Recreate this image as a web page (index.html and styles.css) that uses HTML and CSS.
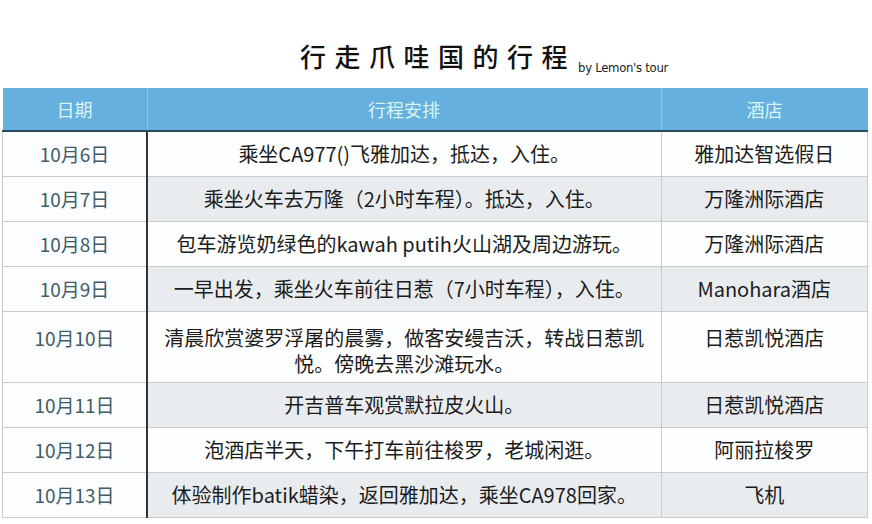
FILE: index.html
```html
<!DOCTYPE html>
<html lang="zh">
<head>
<meta charset="utf-8">
<link rel="stylesheet" href="styles.css">
</head>
<body>
<div class="page">
  <div class="title-bar">
    <h1 class="title">行走爪哇国的行程</h1>
    <span class="byline">by Lemon's tour</span>
  </div>
  <table class="plan">
    <thead>
      <tr>
        <th class="c-date">日期</th>
        <th class="c-plan">行程安排</th>
        <th class="c-hotel">酒店</th>
      </tr>
    </thead>
    <tbody>
      <tr><td class="c-date">10月6日</td><td class="c-plan">乘坐CA977()飞雅加达，抵达，入住。</td><td class="c-hotel">雅加达智选假日</td></tr>
      <tr class="alt"><td class="c-date">10月7日</td><td class="c-plan">乘坐火车去万隆（2小时车程）。抵达，入住。</td><td class="c-hotel">万隆洲际酒店</td></tr>
      <tr><td class="c-date">10月8日</td><td class="c-plan">包车游览奶绿色的kawah putih火山湖及周边游玩。</td><td class="c-hotel">万隆洲际酒店</td></tr>
      <tr class="alt"><td class="c-date">10月9日</td><td class="c-plan">一早出发，乘坐火车前往日惹（7小时车程），入住。</td><td class="c-hotel">Manohara酒店</td></tr>
      <tr class="tall"><td class="c-date">10月10日</td><td class="c-plan">清晨欣赏婆罗浮屠的晨雾，做客安缦吉沃，转战日惹凯悦。傍晚去黑沙滩玩水。</td><td class="c-hotel">日惹凯悦酒店</td></tr>
      <tr class="alt"><td class="c-date">10月11日</td><td class="c-plan">开吉普车观赏默拉皮火山。</td><td class="c-hotel">日惹凯悦酒店</td></tr>
      <tr><td class="c-date">10月12日</td><td class="c-plan">泡酒店半天，下午打车前往梭罗，老城闲逛。</td><td class="c-hotel">阿丽拉梭罗</td></tr>
      <tr class="alt last"><td class="c-date">10月13日</td><td class="c-plan">体验制作batik蜡染，返回雅加达，乘坐CA978回家。</td><td class="c-hotel">飞机</td></tr>
    </tbody>
  </table>
</div>
</body>
</html>
```

FILE: styles.css
```css
html, body {
  margin: 0;
  padding: 0;
  background: #ffffff;
}
body {
  font-family: "Noto Sans CJK SC", "Noto Sans", sans-serif;
  color: #1c1c1c;
}
.page {
  width: 872px;
  height: 524px;
  overflow: hidden;
}
.title-bar {
  height: 88px;
  display: flex;
  align-items: flex-end;
  justify-content: center;
  padding-left: 96px;
  box-sizing: border-box;
}
.title {
  margin: 0 0 15px 0;
  font-size: 26px;
  font-weight: 500;
  letter-spacing: 8.5px;
  line-height: 34px;
  color: #111;
}
.byline {
  font-family: "Liberation Sans Narrow", "DejaVu Sans Condensed", sans-serif;
  font-size: 13px;
  color: #222;
  margin: 0 0 13px 2px;
  letter-spacing: -0.3px;
}
.plan {
  margin-left: 2px;
  width: 866px;
  border-collapse: collapse;
  table-layout: fixed;
}
.plan th {
  height: 42px;
  background: #65b0de;
  color: #d9f6f4;
  font-weight: 400;
  font-size: 18px;
  border-bottom: 2px solid #2c4a58;
  border-left: 1px solid #8cc4e6;
  padding: 0;
}
.plan th:first-child { border-left: none; }
.plan td {
  height: 44px;
  padding: 0 14px;
  text-align: center;
  font-size: 20px;
  line-height: 28px;
  border-bottom: 1px solid #c9cbcd;
  border-left: 1px solid #c9cbcd;
  background: #fdfefe;
}
.plan .c-date { width: 144px; }
.plan .c-hotel { width: 206px; }
.plan td.c-date {
  color: #405c68;
  background: #fbfdfe;
  border-left: 1px solid #c9cbcd;
  border-right: 2px solid #333;
  font-size: 19px;
}
.plan tr.alt td { background: #e9ecef; }
.plan tr.alt td.c-date { background: #fbfdfe; }
.plan tr.tall td {
  height: 57px;
  vertical-align: top;
  padding-top: 13px;
  line-height: 26px;
}
.plan td.c-hotel { border-right: 1px solid #c9cbcd; }
```
